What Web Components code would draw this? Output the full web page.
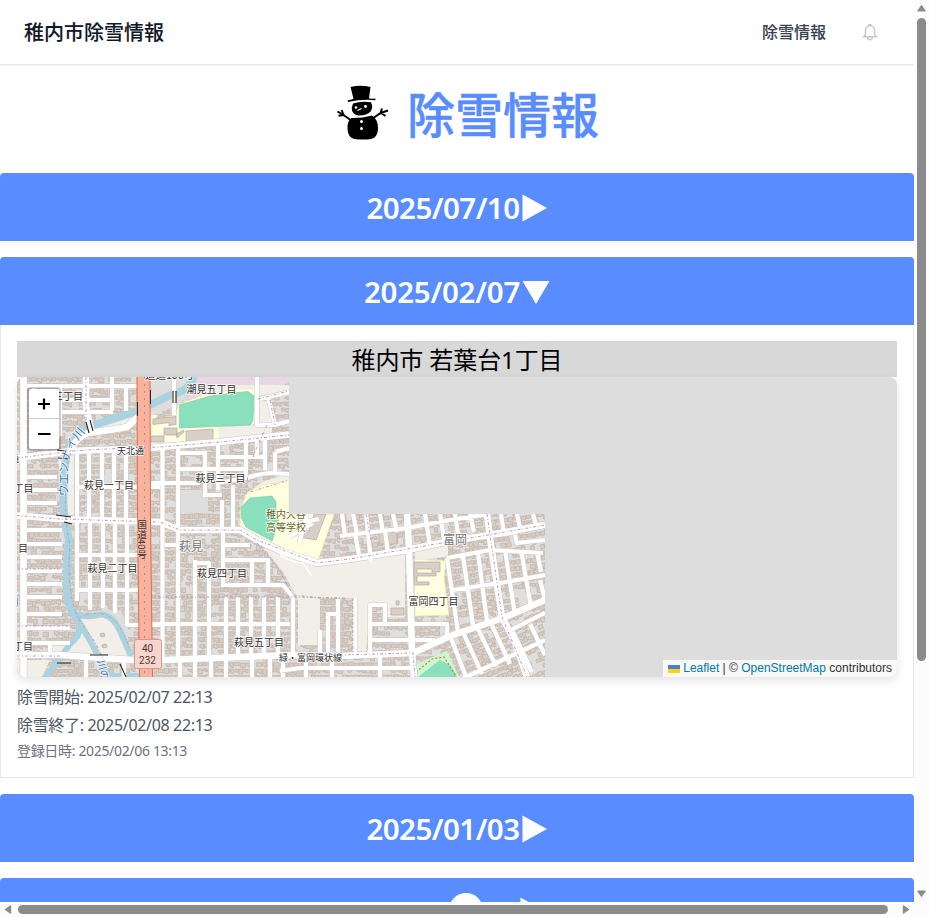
<!DOCTYPE html>
<html lang="ja">
<head>
<meta charset="utf-8">
<title>稚内市除雪情報</title>
<style>
html,body{margin:0;height:100%;overflow:hidden;background:#fff}
body{font-family:"Open Sans","Noto Sans CJK JP",sans-serif}
</style>
</head>
<body>
<app-window>
  <site-header slot="head" brand="稚内市除雪情報" link="除雪情報"></site-header>
  <page-title>除雪情報</page-title>
  <date-panel date="2025/07/10"></date-panel>
  <date-panel date="2025/02/07" open>
    <snow-report place="稚内市 若葉台1丁目">
      <area-map slot="map"></area-map>
      <span slot="start">除雪開始: 2025/02/07 22:13</span>
      <span slot="end">除雪終了: 2025/02/08 22:13</span>
      <span slot="stamp">登録日時: 2025/02/06 13:13</span>
    </snow-report>
  </date-panel>
  <date-panel date="2025/01/03"></date-panel>
  <date-panel marker></date-panel>
</app-window>
<script>
const define=(name,render,after)=>customElements.define(name,class extends HTMLElement{
  connectedCallback(){
    if(this.shadowRoot)return;
    const root=this.attachShadow({mode:'open'});
    root.innerHTML=render(this);
    if(after)after(root,this);
  }
});

define('scroll-bar',el=>{
  const h=el.hasAttribute('horizontal');
  return `<style>
  :host{display:flex;flex-direction:${h?'row':'column'};align-items:center;justify-content:space-between;background:#fcfcfc;box-sizing:border-box;padding:${h?'0 4px':'4px 0'}}
  .t{display:flex;flex:1;${h?'padding:0 14px 0 6px;align-self:stretch;align-items:center':'padding:6px 0 0;align-self:stretch;flex-direction:column;align-items:center'}}
  i{display:block;border-radius:5px;background:#8b8b8b;${h?'width:870px;height:9px':'width:9px;height:643px'}}
  svg{display:block;flex:none}
  </style>
  ${h?'<svg width="8" height="9"><path d="M6.5 1v7L1.5 4.5z" fill="#8b8b8b" stroke="#8b8b8b" stroke-width="1.4" stroke-linejoin="round"/></svg>':'<svg width="9" height="8"><path d="M1 6.8h7L4.5 1.8z" fill="#8b8b8b" stroke="#8b8b8b" stroke-width="1.4" stroke-linejoin="round"/></svg>'}
  <div class="t"><i></i></div>
  ${h?'<svg width="8" height="9"><path d="M1.5 1v7l5-3.5z" fill="#8b8b8b" stroke="#8b8b8b" stroke-width="1.4" stroke-linejoin="round"/></svg>':'<svg width="9" height="8"><path d="M1 1.2h7L4.5 6.2z" fill="#8b8b8b" stroke="#8b8b8b" stroke-width="1.4" stroke-linejoin="round"/></svg>'}`;
});

define('app-window',()=>`<style>
:host{display:grid;grid-template:1fr 15px / 1fr 15px;width:929px;height:917px;overflow:hidden;background:#fcfcfc}
main{overflow:hidden;background:#fff;min-height:0}
.list{display:flex;flex-direction:column;gap:16px}
</style><main><slot name="head"></slot><div class="list"><slot></slot></div></main>
<scroll-bar></scroll-bar><scroll-bar horizontal></scroll-bar>`);

define('site-header',el=>`<style>
:host{display:flex;align-items:center;justify-content:space-between;box-sizing:border-box;height:65px;padding:0 34px 0 24px;border-bottom:1px solid #e5e7eb;box-shadow:0 1px 2px rgba(0,0,0,.06);font-family:"Noto Sans CJK JP",sans-serif}
b{font-size:20px;font-weight:500;color:#111827;line-height:28px;-webkit-text-stroke:.12px}
nav{display:flex;align-items:center;gap:34px;color:#374151;font-size:16px;font-weight:500;line-height:24px}
nav span{padding-bottom:2px;-webkit-text-stroke:.1px}
svg{display:block}
</style><b>${el.getAttribute('brand')}</b><nav><span>${el.getAttribute('link')}</span>
<svg width="20" height="20" viewBox="0 0 20 20" fill="none" stroke="#c6c9d2" stroke-width="1.600" stroke-linecap="round" stroke-linejoin="round"><path d="M3.3 14.7h13.4M4.3 14.4c.9-1 1.2-2.2 1.2-3.8V8.3a4.5 4.5 0 0 1 9 0v2.3c0 1.600.3 2.800 1.200 3.800M8.800 3.300a1.300 1.300 0 0 1 2.400 0M7.600 15.300a2.400 2.400 0 0 0 4.800 0"/></svg></nav>`);

define('page-title',()=>`<style>
:host{display:flex;align-items:center;justify-content:center;box-sizing:border-box;height:92px;padding:2px 0 0 21px;gap:17px;color:#588cff;font:500 48px/60px "Noto Sans CJK JP",sans-serif}
svg{display:block;margin-top:1px}
span{-webkit-text-stroke:.4px}
</style><svg width="54" height="56" viewBox="336 85 54 56"><g fill="#000"><path d="M350.500 87q10-2.500 20 0l-1.500 11.500q4 .3 6.300 0l.2 1.800q-13-1.600-27.500 1.800l-.3-1.900q3-.2 5.800-1.500z"/><path d="M353 103.500q8-2.500 18-1.200 2.500 5-.3 9-4 4.500-12 4.300-7-.8-7-7.500z"/><path d="M351.500 118q10 .3 20.500-2.500 6 4 6 12.500 0 11.500-11 11.500h-8c-8 0-11.500-3.500-11.500-12 0-5 1.500-7.500 4-9.500z"/></g><path d="M352 121L343.500 115l-6-3.500M343.500 115l-1.800-5M343.500 115l-5 .8M372.500 118.500l8-5.500 1.500-4.500M380.500 113l7.500-2.500M381 113l4.500 3" fill="none" stroke="#000" stroke-width="2"/><g fill="#fff"><circle cx="356" cy="107.500" r="1.300"/><circle cx="365.500" cy="106.500" r="1.400"/><circle cx="361.500" cy="121.500" r="1.500"/><circle cx="361.500" cy="128.500" r="1.500"/></g><path d="M357.500 110.500l4-2" stroke="#fff" stroke-width="1.300"/></svg><span><slot></slot></span>`);

define('date-panel',el=>{
  const open=el.hasAttribute('open'),marker=el.hasAttribute('marker');
  const inner=marker
   ?'<svg width="34" height="34"><circle cx="17" cy="17" r="17" fill="#fff"/></svg><svg width="25" height="28"><path d="M.5.500L25 14 .5 27.500z" fill="#fff"/></svg>'
   :`<span>${el.getAttribute('date')}</span>${open?'<svg width="28" height="28"><path d="M.5 3h27L14 26z" fill="#fff"/></svg>':'<svg width="25" height="28"><path d="M.5.500L25 14 .5 27.500z" fill="#fff"/></svg>'}`;
  return `<style>
:host{display:block;flex:none}
header{display:flex;justify-content:center;align-items:center;box-sizing:border-box;height:68px;padding-right:${open?0:1}px;background:#588cff;color:#fff;border-radius:4px 4px 0 0;font:600 29.500px/36px "Noto Sans","Open Sans",sans-serif}
header.ball{justify-content:flex-start;align-items:flex-start;padding:15px 0 0 448.500px;gap:37px}
header.ball svg+svg{margin-top:4px}
header span{padding-top:1px;margin-right:${open?2:2}px;letter-spacing:${open?-.25:-.55}px}
header svg{margin-top:${marker?0:open?2:1}px}
svg{display:block;flex:none}
section{border:1px solid #e5e7eb;border-top:0;padding:16px;height:420px}
</style><header class="${marker?'ball':''}">${inner}</header>${open?'<section><slot></slot></section>':''}`;
});

define('snow-report',el=>`<style>
:host{display:block;font-family:"Open Sans","Noto Sans CJK JP",sans-serif}
h3{margin:0;height:36px;background:#d8d8d8;color:#000;text-align:center;font:400 24px/38px "Noto Sans","Noto Sans CJK JP",sans-serif;letter-spacing:-.1px}
.d{display:flex;flex-direction:column;padding-top:6px;color:#4b5563;font:400 16px/28px "Noto Sans","Noto Sans CJK JP",sans-serif;letter-spacing:-.33px}
.s{font-size:14px;line-height:24px;color:#6b7280}
</style><h3>${el.getAttribute('place')}</h3><slot name="map"></slot><div class="d"><div><slot name="start"></slot></div><div><slot name="end"></slot></div><div class="s"><slot name="stamp"></slot></div></div>`);

/* Small seeded generator so that the building pattern is stable. */
let seed=7;
const rnd=()=>(seed=(seed*16807)%2147483647)/2147483647;
function houses(x0,y0,x1,y1){
  let d='';
  for(let y=y0;y<y1;y+=6.2){
    for(let x=x0;x<x1;){
      const w=2.6+rnd()*2.7,h=2.8+rnd()*2.300;
      if(rnd()>.11){
        const a=x+rnd()*.5,b=y+rnd()*1.2;
        d+=rnd()>.65?`M${a.toFixed(1)} ${b.toFixed(1)}h${w.toFixed(1)}v${h.toFixed(1)}h-${(w/2).toFixed(1)}v-1.200h-${(w/2).toFixed(1)}z`:`M${a.toFixed(1)} ${b.toFixed(1)}h${w.toFixed(1)}v${h.toFixed(1)}h-${w.toFixed(1)}z`;
      }
      x+=w+1.100;
    }
  }
  return d;
}
const v=(xs,a,b)=>xs.map(x=>`M${x} ${a}V${b}`).join('');
const hz=(ys,a,b)=>ys.map(y=>`M${a} ${y}H${b}`).join('');

const minor=[
 hz([386],27,138),hz([400,412],60,113),v([112],377,411),v([126],388,411),'M34 386V412M60 386V436M34 436H60',
 v([77,89,102,114,126],450,520),hz([487],75,160),hz([477,490,503],27,57),
 v([77,90,103,115,127],520,592),'M77 592V601M90 592V610M103 592V608M115 592V613M127 592V625H162',hz([555,590],75,139),
 hz([530,544,557,571,584,597,614],27,62),hz([628,643],27,70),'M50 643V655M86 660V677M124 660V677',
 v([162.500,178],447,660),'M205 451V497M218 443V490M246 440V478M265 439V470M275 452V473M257 440V455M233 485V530M222 500V530',
 hz([453],178,205),hz([469],178,246),hz([457],218,265),'M150 483H200M205 495H222M217 483L247 478Q258 474 270 473L289 474M275 452L289 448',
 'M165 545H180M195 560V660M195 563H209V660M223 533V587M223 545H250M223 560H268V583M252 560V585M223 585H283L293 597',
 v([226,238,251,264,278],597,656),v([293],597,656),hz([624],150,290),
 v([180,195,211,226,252,270,283],656,677),'M280 671L300 668H413M306 655V677M332 655V677M338 599V652M328 652V614H340M320 630V655M355 598V655',
 'M257 377V425H275L289 421M260 399L289 392M275 425L268 397M174 377V415',
 'M342 514l3 22M353 514l4 20M366 514l5 48M380 514l3 18M393 514l4 18M425 514l5 32M440 514l4 25M455 514l4 27M470 514l4 18M501 514l3 20M517 514l4 18M533 514l4 15M355 533l4 22M385 530l3 24',
 'M340 536L407 528L450 520L490 514M289 537l24-14M307 514l-8 30M289 525l30-6',
 'M447 558L490 550L543 553M453 590L500 583L545 575M447 558L458 632M463 556L473 625M478 553L487 621M505 550L515 615M521 550L531 607M537 552L541 572M540 580L545 600M515 535l2 8L545 540M497 535L517 532',
 'M370 655V605H385V624M370 624L447 624V636M370 640H435M380 655V677M380 668H413',
 'M451 638L466 677M463 632L482 674M477 627L496 666M490 621L510 664M513 632L532 672M530 624L545 655M460 680L496 663L545 640M507 632L545 613'
].join('');
const major=[
 'M23.500 377V677','M17 458L58 453Q66 450 140 449L160 447L220 442L289 434.500',
 'M70 450Q76 438 88 433L110 430L127 427L138 417',
 'M86 377V407L91 430','M17 515.500L60 519L160 522L180 530H240L257 540L283 552L317 563L350 559L407 550L450 541L490 535L545 525',
 'M17 655L60 655L133 660L163 660L293 655L340 656L413 653L450 636L503 618L545 600',
 'M407 514L409 548L412 652L414 677','M487 514L491 545L497 585L502 617L514 640L527 677'
].join('');
const foot='M17 458L58 453Q66 450 160 447L220 442L289 435M86 377V425M72 445Q60 500 70 545Q66 590 78 618L95 642L106 665M78 618Q115 600 130 650M17 569H62M17 626H72M17 515.500L60 519L160 522L180 530H240L257 540L317 563L350 559L545 525M150 597H293L345 598M257 543L278 568L293 595L320 598M366 514L371 540M17 656L60 656M340 655L413 653L415 677M353 598V655M487 514L502 617L527 677M258 399L289 391M270 400L275 425M267 425Q240 480 250 492L289 480';
const riverWide='M193 377Q191 390 173 394L137 411L110 420L88 427Q74 435 67 452Q62 475 64 515Q66 525 69 540L67 570L67 595Q69 610 78 620';
const riverThin='M77 617Q84 634 71 643L56 663L44 679M76 614L84 616Q92 617 100 614.500Q112 614 120 631L131 656M77 618L93 646L103 666L111 680M107 676H140';

define('area-map',()=>`<style>
:host{display:grid;height:300px;border-radius:8px;overflow:hidden;background:#ddd;box-shadow:0 4px 10px rgba(0,0,0,.1);grid-template-columns:1fr auto;align-items:end}
.m{grid-area:1/1/2/3;display:block;width:880px;height:300px}
.z{grid-area:1/1;align-self:start;justify-self:start;margin:10px;z-index:1;border:2px solid rgba(0,0,0,.2);border-radius:4px;background:#fff;background-clip:padding-box;width:30px}
.z div{height:30px;box-sizing:border-box;display:flex;align-items:center;justify-content:center}
.z div:first-child{border-bottom:1px solid #ccc}
.a{grid-area:1/2;display:flex;align-items:center;z-index:1;height:17px;padding:0 5px;background:rgba(255,255,255,.8);color:#333;font:12px/17px "Liberation Sans",Arial,sans-serif;white-space:pre}
.a svg{margin-right:3px}.a em{font-style:normal;color:#0078a8}
</style>
<svg class="m" viewBox="17 377 880 300">
<defs>
<clipPath id="tiles"><path d="M17 377H289V514H545V677H17z"/></clipPath>
<clipPath id="west"><path d="M17 377H289V514H340V560H440V677H17z"/></clipPath>
<clipPath id="north"><path d="M340 514H545V600L445 638L440 560H340z"/></clipPath>
<clipPath id="south"><path d="M440 640L545 600V677H440z"/></clipPath>
<path id="flow" d="M68 496L68 465Q70 445 92 426"/>
</defs>
<g clip-path="url(#tiles)">
<path d="M17 377H545V677H17z" fill="#dfdfdf"/>
<g fill="#d9cec5" stroke="#c0b0a2" stroke-width=".7">
<path clip-path="url(#west)" d="${houses(17,377,442,677)}"/>
<g clip-path="url(#north)"><path transform="rotate(-8 440 570)" d="${houses(320,490,570,670)}"/></g>
<g clip-path="url(#south)"><path transform="rotate(-22 490 640)" d="${houses(420,570,580,720)}"/></g>
</g>
<g fill="#f2efe9">
<path d="M260 543L283 554L317 567L350 562L405 553V617H386V605H370L366 652H353V598H320V645H298V598L283 572z"/>
<path d="M76 618Q102 612 112 620L130 656H60L78 636zM72 645L60 655H50V646zM17 660H50L42 677H17zM74 452L58 455L62 515H74zM70 448Q78 432 90 430L138 412V420L88 436z"/>
<path d="M219 427L272 424V436L219 440zM259 400L268 397L273 423H260zM415 547L448 540V556L415 561zM240 520L245 495L262 482L289 473V485L260 490z"/>
<path d="M150 377H200L180 405L150 416zM100 610H120L128 625V656L112 616z" fill="#dedede"/><path d="M195 377H289V383L257 394L184 400L196 386z" fill="#e7d7e5"/>
<path d="M215 385H289V391L257 396L235 388L200 396z"/>
<path d="M180 490H208V513H180z" fill="#dedede"/>
</g>
<g fill="#ffffe0" stroke="#f2eda5" stroke-width=".7">
<path d="M178 405L200 396L235 389L256 389V424L219 427V441L151 445V420L176 415z"/>
<path d="M151 425L158 415H140V446H151z"/>
<path d="M240 527L241 508L248 492L263 485L289 481V514H334L318 560L283 550z"/>
<path d="M414 559L446 561L444 578L449 615L415 616z"/></g>
<g fill="#8ae0bd" stroke="#70cba8" stroke-width=".6"><path d="M179.500 405L210 396L238 392.500L248 391.500L254 396L253 421L250 425L179.500 428z"/><path d="M241.500 507L250 498L272 496L276 502V514L279 520L272 541L246 527L241.500 518z"/></g>
<path d="M414 677L416 664L447 651L459 677z" fill="#c8facc"/><path d="M418 677L440 660L450 665L457 677z" fill="#8ae0bd"/><path d="M416 672L432 659L444 657L456 676" fill="none" stroke="#e46b63" stroke-width="1.200" stroke-dasharray="2 2"/>
<g fill="#d9cfc9" stroke="#b5a89c" stroke-width=".7"><path d="M153 419l23-2.500v8l-7 1v-3l-16 2zM164 428h13v7h-13zM186 431l27-2v12l-27 1.500zM176 434l8-4v2l-7 6zM151 436h13v6h-13z"/><path d="M314 514h12l-10 26l-17-3l2-8l8 2zM414 562h26v10h-8v-3h-15v4h19v3h-19v6h12v3h-15zM379 532h18v12h-18zM391 608h13v7h-13zM396 601h3v4h-3z"/><path d="M100 634l4-1 1 3-4 1zM102 645l4-1 1 3-4 1z"/></g>
<g fill="none" stroke="#aad3df"><path d="${riverWide}" stroke-width="8"/><path d="${riverThin}" stroke-width="6"/></g>
<g fill="none" stroke-linejoin="round"><path d="${minor}" stroke="#cfcac8" stroke-width="5"/><path d="${major}" stroke="#c9c5c3" stroke-width="7.600"/><path d="${minor}" stroke="#fff" stroke-width="4.200"/><path d="${major}" stroke="#fff" stroke-width="6.600"/>
<path d="M280 555Q293 563 303 563L312 576" stroke="#fff" stroke-width="1.500"/>
<path d="${foot}" stroke="#b99cb9" stroke-width="1" stroke-dasharray="3 2 1 2"/>
<path d="M86 422l3 11M90 420l3 11M173 391v12M176 391v12M57 450l8 1M58 458l12 1M56 515l15 2M64 522l8 2M90 655h18M57 663h14M120 664l6 13" stroke="#222" stroke-width="1.100"/>
<path d="M143.500 377L144 520L146 677" stroke="#dc6d53" stroke-width="14"/><path d="M143.500 377L144 520L146 677" stroke="#f9b29c" stroke-width="12"/><path d="M144.500 377V677" stroke="#b3878b" stroke-width="1" stroke-dasharray="2 5"/>
<path d="M137.500 402v14M150.500 390v14" stroke="#222"/></g>
<g font-family="'Noto Sans CJK JP',sans-serif" font-size="10" fill="#333" stroke="#fff" stroke-opacity=".75" stroke-width="2" paint-order="stroke" stroke-linejoin="round">
<text x="145" y="379" font-size="10.500">道道106号</text>
<text x="186.500" y="393">潮見五丁目</text><text x="53" y="399.500">三丁目</text><text x="117" y="454" font-size="9">天北通</text>
<text x="84" y="489">萩見一丁目</text><text x="195.500" y="482">萩見三丁目</text><text x="13.500" y="492">丁目</text><text x="8" y="552">丁目</text><text x="-1" y="606">丁目</text><text x="13" y="650">丁目</text><text x="10" y="462" font-size="9">通</text>
<text x="87.500" y="571.500">萩見二丁目</text><text x="197" y="577">萩見四丁目</text><text x="234" y="646">萩見五丁目</text><text x="408.500" y="605">富岡四丁目</text>
<text x="279" y="661" font-size="9">緑・富岡環状線</text>
<g fill="#777" font-size="12"><text x="179" y="551">萩見</text><text x="443" y="544">富岡</text></g>
<g fill="#6b6b20"><text x="266" y="517.500">稚内大谷</text><text x="266" y="531">高等学校</text></g>
<text x="142" y="520" font-size="9.500" style="writing-mode:vertical-rl" stroke="#f9b29c">国道40号</text>
<text fill="#3d76b0" font-size="11.500"><textPath href="#flow">ウエンナイ川</textPath></text>
<text fill="#3d76b0" transform="translate(97 661) rotate(75)" font-size="10">川の</text>
</g>
<rect x="134.500" y="639.500" width="27" height="29" rx="2" fill="#f5d6cf" stroke="#d99a89"/>
<g font-family="Roboto,sans-serif" font-size="10" fill="#653025" text-anchor="middle"><text x="147.500" y="652">40</text><text x="147.500" y="664">232</text></g>
</g></svg>
<div class="z"><div><svg width="14" height="14"><path d="M7 1.500v11M1 7h12" stroke="#000" stroke-width="2.200"/></svg></div><div><svg width="14" height="14"><path d="M1 7h12.500" stroke="#000" stroke-width="2"/></svg></div></div>
<div class="a"><svg width="12" height="8"><path fill="#4c7be1" d="M0 0h12v4H0z"/><path fill="#ffd500" d="M0 4h12v4H0z"/></svg><em>Leaflet</em> | © <em>OpenStreetMap</em> contributors</div>`);
</script>
</body>
</html>
